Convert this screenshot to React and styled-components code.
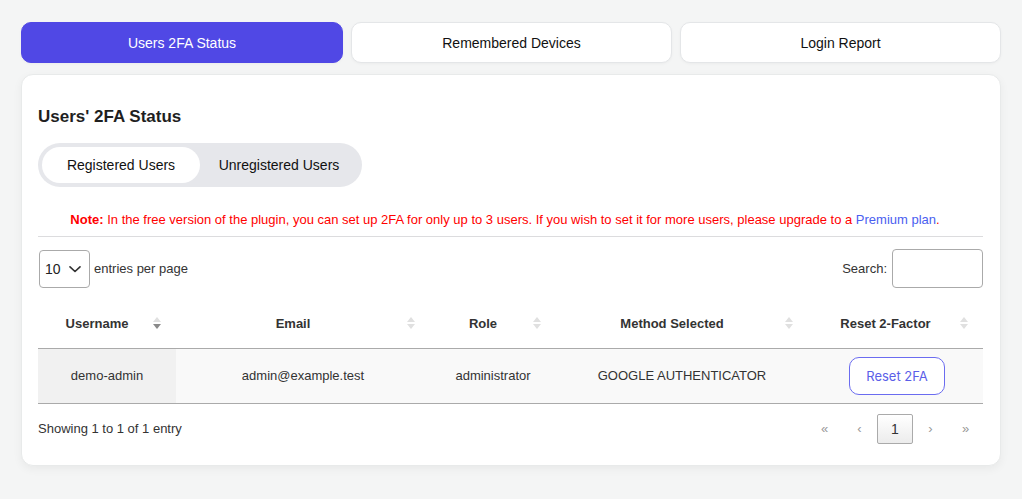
import React from "react";
import styled, { createGlobalStyle } from "styled-components";

const Global = createGlobalStyle`
  html, body { margin: 0; padding: 0; background: #f4f5f5; }
  body { font-family: "Liberation Sans", Arial, sans-serif; color: #333; }
  * { box-sizing: border-box; }
`;

const Page = styled.div`
  padding: 22px 22px 34px 21px;
  display: flex;
  flex-direction: column;
  gap: 11px;
`;

const TabBar = styled.div`
  display: grid;
  grid-template-columns: 322px 321px 321px;
  gap: 8px;
`;

const Tab = styled.button`
  height: 41px;
  border-radius: 10px;
  border: 1px solid ${(p) => (p.$active ? "#5048e5" : "#e4e6e8")};
  background: ${(p) => (p.$active ? "#5048e5" : "#ffffff")};
  color: ${(p) => (p.$active ? "#ffffff" : "#111")};
  font-family: "Liberation Sans", Arial, sans-serif;
  font-size: 14px;
  box-shadow: 0 1px 3px rgba(0, 0, 0, 0.04);
  cursor: pointer;
`;

const Card = styled.div`
  width: 980px;
  background: #fff;
  border: 1px solid #e8eaea;
  border-radius: 12px;
  box-shadow: 0 3px 10px rgba(0, 0, 0, 0.05);
  padding: 32px 17px 21px 16px;
`;

const Title = styled.h2`
  margin: 0;
  font-size: 17px;
  line-height: 20px;
  font-weight: 700;
  color: #1f1f1f;
`;

const Toggle = styled.div`
  margin-top: 16px;
  width: 324px;
  height: 44px;
  border-radius: 22px;
  background: #e6e7eb;
  padding: 4px;
  display: flex;
  align-items: center;
`;

const ToggleOption = styled.div`
  height: 36px;
  border-radius: 18px;
  background: ${(p) => (p.$active ? "#fff" : "transparent")};
  width: ${(p) => p.$w}px;
  display: flex;
  align-items: center;
  justify-content: center;
  font-size: 14px;
  color: #111;
`;

const Note = styled.p`
  margin: 25px 0 0;
  text-align: center;
  font-size: 13px;
  line-height: 15px;
  color: #ff0000;
  padding-right: 11px;
  b { font-weight: 700; }
  a { color: #4a5ef0; text-decoration: none; }
`;

const Rule = styled.div`
  margin-top: 9px;
  height: 1px;
  background: #dcdcde;
`;

const Controls = styled.div`
  margin-top: 12px;
  display: flex;
  justify-content: space-between;
  align-items: center;
  font-size: 13px;
  color: #333;
`;

const ControlGroup = styled.label`
  display: flex;
  align-items: center;
  gap: 4px;
`;

const SelectBox = styled.div`
  width: 51px;
  height: 38px;
  border: 1px solid #aaa;
  border-radius: 4px;
  display: flex;
  align-items: center;
  justify-content: space-between;
  padding: 0 4px 0 5px;
  font-size: 14px;
  color: #222;
  margin-left: 1px;
`;

const SearchInput = styled.div`
  width: 91px;
  height: 39px;
  border: 1px solid #aaa;
  border-radius: 4px;
  margin-left: 1px;
`;

const Table = styled.table`
  margin-top: 12px;
  width: 945px;
  border-collapse: collapse;
  table-layout: fixed;
`;

const Th = styled.th`
  position: relative;
  height: 48px;
  font-size: 13px;
  font-weight: 700;
  color: #333;
  text-align: center;
  border-bottom: 1px solid #aaa;
  padding: 0 30px 0 10px;
`;

const SortIcon = styled.span`
  position: absolute;
  right: 15px;
  top: 17px;
  display: flex;
  flex-direction: column;
  gap: 2px;
  &::before, &::after {
    content: "";
    width: 0;
    height: 0;
    border-left: 4px solid transparent;
    border-right: 4px solid transparent;
  }
  &::before { border-bottom: 5px solid #e0e0e0; }
  &::after { border-top: 5px solid ${(p) => (p.$desc ? "#8a8a8a" : "#e0e0e0")}; }
`;

const Tr = styled.tr`
  background: #f9f9f9;
`;

const Td = styled.td`
  height: 55px;
  font-size: 13px;
  color: #333;
  text-align: center;
  border-bottom: 1px solid #aaa;
  background: ${(p) => (p.$sorted ? "#f1f1f1" : "transparent")};
  padding: 0 8px;
`;

const ResetButton = styled.button`
  width: 96px;
  height: 38px;
  border: 1px solid #6b6cf0;
  border-radius: 10px;
  background: #fff;
  color: #5b5ee8;
  font-family: Inter, "Liberation Sans", sans-serif;
  font-size: 13px;
  margin-left: 3px;
  cursor: pointer;
`;

const Footer = styled.div`
  margin-top: 10px;
  display: flex;
  justify-content: space-between;
  align-items: center;
  font-size: 13px;
  color: #333;
`;

const Pager = styled.div`
  display: flex;
  align-items: center;
`;

const PageLink = styled.span`
  width: ${(p) => (p.$current ? "36px" : "35px")};
  height: 30px;
  display: flex;
  align-items: center;
  justify-content: center;
  font-size: ${(p) => (p.$current ? "14px" : "13px")};
  color: ${(p) => (p.$current ? "#333" : "#999")};
  border: 1px solid ${(p) => (p.$current ? "#aaa" : "transparent")};
  border-radius: 2px;
  background: ${(p) =>
    p.$current ? "linear-gradient(#fff, #ececec)" : "transparent"};
`;

const Chevron = () => (
  <svg width="20" height="20" viewBox="0 0 24 24" fill="none" stroke="#333" strokeWidth="2" strokeLinecap="round" strokeLinejoin="round">
    <path d="M6 9.5l6 5.5 6-5.5" />
  </svg>
);

const cols = [
  { label: "Username", w: 138, desc: true },
  { label: "Email", w: 254 },
  { label: "Role", w: 126 },
  { label: "Method Selected", w: 252 },
  { label: "Reset 2-Factor", w: 175 },
];

export default function App() {
  return (
    <>
      <Global />
      <Page>
        <TabBar>
          <Tab $active>Users 2FA Status</Tab>
          <Tab>Remembered Devices</Tab>
          <Tab>Login Report</Tab>
        </TabBar>
        <Card>
          <Title>Users' 2FA Status</Title>
          <Toggle>
            <ToggleOption $active $w={158}>Registered Users</ToggleOption>
            <ToggleOption $w={158}>Unregistered Users</ToggleOption>
          </Toggle>
          <Note>
            <b>Note:</b> In the free version of the plugin, you can set up 2FA for only up to 3 users. If you wish to set it for more users, please upgrade to a <a href="#">Premium plan</a>.
          </Note>
          <Rule />
          <Controls>
            <ControlGroup>
              <SelectBox>
                <span>10</span>
                <Chevron />
              </SelectBox>
              entries per page
            </ControlGroup>
            <ControlGroup>
              Search:
              <SearchInput />
            </ControlGroup>
          </Controls>
          <Table>
            <colgroup>
              {cols.map((c) => (
                <col key={c.label} style={{ width: c.w }} />
              ))}
            </colgroup>
            <thead>
              <tr>
                {cols.map((c) => (
                  <Th key={c.label}>
                    {c.label}
                    <SortIcon $desc={c.desc} />
                  </Th>
                ))}
              </tr>
            </thead>
            <tbody>
              <Tr>
                <Td $sorted>demo-admin</Td>
                <Td>admin@example.test</Td>
                <Td>administrator</Td>
                <Td>GOOGLE AUTHENTICATOR</Td>
                <Td>
                  <ResetButton>Reset 2FA</ResetButton>
                </Td>
              </Tr>
            </tbody>
          </Table>
          <Footer>
            <span>Showing 1 to 1 of 1 entry</span>
            <Pager>
              <PageLink>«</PageLink>
              <PageLink>‹</PageLink>
              <PageLink $current>1</PageLink>
              <PageLink>›</PageLink>
              <PageLink>»</PageLink>
            </Pager>
          </Footer>
        </Card>
      </Page>
    </>
  );
}
